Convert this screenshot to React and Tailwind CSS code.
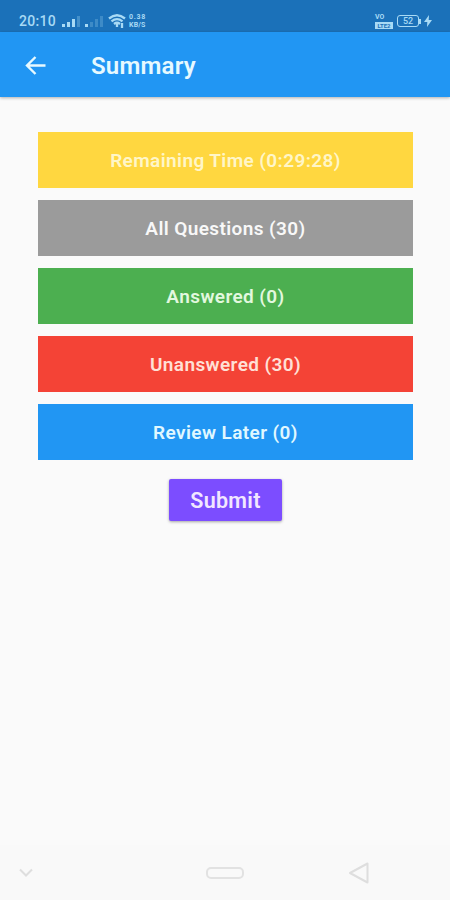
import React from 'react';

const stats = [
    { label: 'Remaining Time (0:29:28)', box: 'bg-[#ffd740] text-[#fff6c8]' },
    { label: 'All Questions (30)', box: 'bg-[#9b9b9b] text-[#f8f8f8]' },
    { label: 'Answered (0)', box: 'bg-[#4caf50] text-[#e2f8df]' },
    { label: 'Unanswered (30)', box: 'bg-[#f44336] text-[#ffe0d6]' },
    { label: 'Review Later (0)', box: 'bg-[#2196f3] text-[#e0f8ff]' },
];

function StatusBar() {
    return (
        <div className="h-8 bg-[#1b71b9] text-[#a8daf5] flex items-center justify-between pl-[19px] pr-[18px] pt-[10px]">
            <div className="flex items-center">
                <span className="text-[14px] leading-none font-medium tracking-[0.3px] w-[38px]">20:10</span>
                <svg width="20" height="12" viewBox="0 0 20 12" className="ml-[4px]">
                    <path d="M1 9h3v3H1zM6 7h3v5H6zM11 4h3v8h-3z" fill="currentColor" />
                    <path d="M16 1h3v11h-3z" fill="currentColor" opacity="0.3" />
                </svg>
                <svg width="20" height="12" viewBox="0 0 20 12" className="ml-[3px]">
                    <path d="M1 9h3v3H1z" fill="currentColor" />
                    <path d="M6 7h3v5H6zM11 4h3v8h-3zM16 1h3v11h-3z" fill="currentColor" opacity="0.25" />
                </svg>
                <svg width="18" height="14" viewBox="0 0 18 14" className="ml-[4px]" fill="none" stroke="currentColor" strokeWidth="2.3">
                    <path d="M1 4.5Q9-2 17 4.5M3.5 7.3Q9 3 14.5 7.3M6 10q3-2.4 6 0" />
                    <path d="M9 10v3M14 9v5" />
                </svg>
                <span className="ml-[3px] w-[20px] flex flex-col gap-px text-[7px] leading-[7px] font-bold">
                    <span className="h-[7px] tracking-[0.7px]">0.38</span>
                    <span className="h-[7px] tracking-[0.2px]">KB/S</span>
                </span>
            </div>
            <div className="flex items-center">
                <span className="w-[20px] flex flex-col gap-px text-[7px] leading-[7px] font-bold">
                    <span className="h-[7px]">VO</span>
                    <span className="h-[7px] w-[18px] bg-[#a8daf5] text-[#1b71b9] text-[6px] leading-[7px] text-center">LTE2</span>
                </span>
                <span className="ml-[2px] w-[22px] h-[12px] rounded-[3px] border border-[#a8daf5] text-[9px] leading-none font-medium flex items-center justify-center">52</span>
                <span className="w-[2px] h-[5px] bg-[#a8daf5]" />
                <svg width="8" height="12" viewBox="0 0 8 12" className="ml-[3px]" fill="currentColor">
                    <path d="M5 0 0 7h3.3L3 12l5-7H4.7z" />
                </svg>
            </div>
        </div>
    );
}

function AppBar() {
    return (
        <header className="h-[65px] bg-[#2196f3] text-[#e6f9ff] flex items-center pl-[25px] shadow-[0_1px_3px_rgba(0,0,0,0.3)]">
            <button className="w-[22px] h-[22px]">
                <svg width="22" height="22" viewBox="0 0 22 22" fill="none" stroke="currentColor" strokeWidth="2.4">
                    <path d="M20.5 11.5H2.5M10.5 3 2 11.5l8.5 8.5" />
                </svg>
            </button>
            <h1 className="ml-[44px] pt-[2px] text-[24px] font-semibold tracking-[0.2px]">Summary</h1>
        </header>
    );
}

function NavBar() {
    return (
        <nav className="h-[55px] bg-[#f9f9f9] text-[#dedede] flex items-center justify-between pl-[18px] pr-[80px]">
            <svg width="16" height="10" viewBox="0 0 16 10" fill="none" stroke="currentColor" strokeWidth="2">
                <path d="M2 1.5l6 6 6-6" />
            </svg>
            <span className="ml-[67px] w-[38px] h-[12px] rounded-[5px] border-2 border-[#e2e2e2]" />
            <svg width="22" height="22" viewBox="0 0 22 22" fill="none" stroke="currentColor" strokeWidth="2" strokeLinejoin="round">
                <path d="M19.5 1.5v19L2 11z" />
            </svg>
        </nav>
    );
}

export default function App() {
    return (
        <div className="w-[450px] h-[900px] bg-[#fafafa] flex flex-col font-['Roboto',sans-serif] overflow-hidden">
            <StatusBar />
            <AppBar />
            <main className="flex-1 pt-[35px] pl-[38px] pr-[37px] flex flex-col items-center">
                <div className="w-full flex flex-col gap-[12.1px]">
                    {stats.map((item) => (
                        <div key={item.label} className={`h-[56px] pt-[2px] flex items-center justify-center text-[19px] font-semibold tracking-[0.4px] ${item.box}`}>
                            {item.label}
                        </div>
                    ))}
                </div>
                <button className="mt-[18.5px] pt-[2px] w-[113px] h-[42px] rounded-[2px] bg-[#7c4dff] text-[#f1e7ff] text-[21.5px] font-semibold tracking-[0.3px] shadow-[0_1px_3px_rgba(0,0,0,0.35)]">
                    Submit
                </button>
            </main>
            <NavBar />
        </div>
    );
}
